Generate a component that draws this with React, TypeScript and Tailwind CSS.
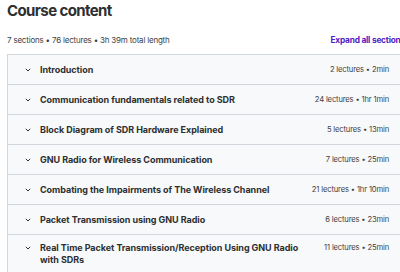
import React from "react";

const sections = [
  { title: "Introduction", meta: "2 lectures • 2min" },
  { title: "Communication fundamentals related to SDR", meta: "24 lectures • 1hr 1min" },
  { title: "Block Diagram of SDR Hardware Explained", meta: "5 lectures • 13min" },
  { title: "GNU Radio for Wireless Communication", meta: "7 lectures • 25min" },
  { title: "Combating the Impairments of The Wireless Channel", meta: "21 lectures • 1hr 10min" },
  { title: "Packet Transmission using GNU Radio", meta: "6 lectures • 23min" },
  { title: "Real Time Packet Transmission/Reception Using GNU Radio with SDRs", meta: "11 lectures • 25min" },
];

function Chevron() {
  return (
    <svg width="6" height="4" viewBox="0 0 6 4" className="shrink-0 text-[#2d2f31]">
      <polyline points="0.8,0.8 3,3 5.2,0.8" fill="none" stroke="currentColor" strokeWidth="1" />
    </svg>
  );
}

export default function App() {
  return (
    <div className="w-[400px] h-[272px] overflow-hidden bg-white" style={{ fontFamily: "Inter, 'Noto Sans', sans-serif" }}>
      <div className="w-[399px] ml-[7px] text-[#2d2f31]">
        <h2 className="text-[15px] leading-[20px] font-bold pt-[1px] tracking-[-0.6px]">Course content</h2>
        <div className="flex items-center justify-between mt-[13px] h-[12px]">
          <span className="text-[8px] tracking-[-0.2px] text-[#3e4143]">7 sections • 76 lectures • 3h 39m total length</span>
          <span className="text-[8.3px] font-bold tracking-[-0.2px] text-[#5022c3] whitespace-nowrap mr-[1px]">Expand all sections</span>
        </div>
        <div className="mt-[8px] border border-[#d1d7dc]">
          {sections.map((s, i) => {
            const last = i === sections.length - 1;
            return (
              <div
                key={i}
                className={`flex items-start bg-[#f7f9fa] pl-[17px] pr-[16px] ${i > 0 ? "border-t border-[#d1d7dc]" : ""} ${last ? "pt-[7px] pb-[8px]" : "py-[8.5px]"}`}
              >
                <div className="h-[12px] flex items-center mr-[9px]">
                  <Chevron />
                </div>
                <div className={`flex-1 text-[9px] font-bold tracking-[-0.05px] pr-[20px] ${last ? "leading-[11.5px]" : "leading-[12px]"}`}>{s.title}</div>
                <div className="text-[7.6px] leading-[12px] tracking-[-0.15px] whitespace-nowrap text-[#3e4143]">{s.meta}</div>
              </div>
            );
          })}
        </div>
      </div>
    </div>
  );
}
